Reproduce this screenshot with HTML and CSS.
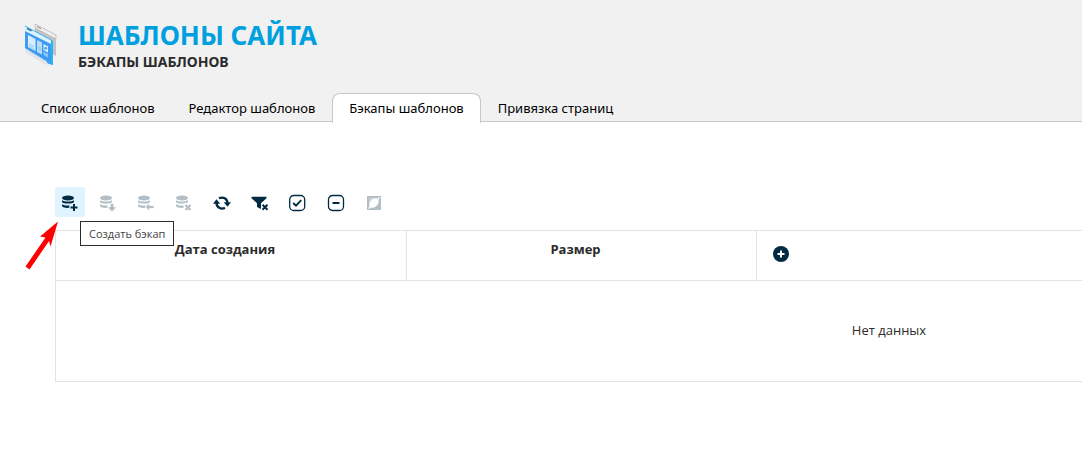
FILE: index.html
```
<!DOCTYPE html>
<html lang="ru">
<head>
<meta charset="utf-8">
<title>Шаблоны сайта</title>
<link rel="stylesheet" href="styles.css">
</head>
<body>
<svg class="defs" aria-hidden="true">
  <symbol id="db" viewBox="0 0 18 18">
    <ellipse cx="7" cy="4" rx="6" ry="2.6"/>
    <path d="M1 6.200c2 1.700 10 1.700 12 0v1.800c-1 2-11 2-12 0zM1 10.200c1.600 1.300 5 1.500 7.600 1.200v2.400C5.500 14.200 2 13.800 1 12z"/>
  </symbol>
</svg>
<header class="header">
  <div class="brand">
    <svg class="logo" viewBox="0 0 34 44" aria-hidden="true">
      <path d="M11 1l21 11v21L11 22z" fill="#c4c4c4"/>
      <path d="M11 1l21 11v4L11 5z" fill="#eee" stroke="#aaa" stroke-width=".6"/>
      <path d="M13 3.500l4 2.200" stroke="#888"/>
      <path d="M1 4l26 13 2 1v24l-4-1L1 27z" fill="#3e9bf4"/>
      <path d="M1 25l22 13.500v4L1 29z" fill="#dde3e8"/>
      <path d="M1 3l26 14v4L1 8z" fill="#e2f2fd"/>
      <path d="M27 17l2 1v24l-2-1z" fill="#27b6f5"/>
      <path d="M1 3l27 14.500" fill="none" stroke="#39b5f1"/>
      <path d="M3 5.500l4.500 2.400" stroke="#2678b5" stroke-width="1.500"/>
      <path d="M4 12l7.500 4v12L4 24z" fill="#d8ecfb"/>
      <path d="M13 17l5 2.600v12L13 29z" fill="#b9dcf8"/>
      <path d="M19.500 21l4.500 2.400v6L19.500 27z" fill="#e0f3fe"/>
      <path d="M19.500 28.500l4.500 2.400v3.500l-4.500-2.400z" fill="#8bc7f7"/>
      <path d="M5 21l5 2.800M5 23l5 2.800M14 24l3 1.600M14 26l3 1.600" stroke="#7db9ed" stroke-width=".7"/>
      <circle cx="21.700" cy="25.200" r="1.500" fill="#4eaaf1"/>
    </svg>
    <div>
      <h1 class="title">ШАБЛОНЫ САЙТА</h1>
      <h2 class="subtitle">БЭКАПЫ ШАБЛОНОВ</h2>
    </div>
  </div>
  <nav class="tabs">
    <a class="tab" href="#list">Список шаблонов</a>
    <a class="tab" href="#editor">Редактор шаблонов</a>
    <a class="tab tab-active" href="#backups" aria-current="page">Бэкапы шаблонов</a>
    <a class="tab" href="#pages">Привязка страниц</a>
  </nav>
</header>
<main class="content">
  <div class="toolbar">
    <button class="tool tool-hover" type="button" aria-label="Создать бэкап" aria-describedby="tip">
      <svg viewBox="0 0 18 18"><use href="#db" width="18" height="18"/><path d="M13 9v9M8.500 13.500h9" stroke="#e0f4ff" stroke-width="4"/><path d="M13 10v7M9.500 13.500h7" stroke="currentColor" stroke-width="2"/></svg>
    </button>
    <button class="tool" type="button" aria-label="Скачать" disabled>
      <svg viewBox="0 0 18 18"><use href="#db" width="18" height="18"/><path d="M11.200 9.500h3.600V13h2.700L13 18l-4.500-5h2.700z" stroke="#fff" stroke-width=".7"/></svg>
    </button>
    <button class="tool" type="button" aria-label="Восстановить" disabled>
      <svg viewBox="0 0 18 18"><use href="#db" width="18" height="18"/><path d="M8.300 13l4.200-4v2.500H17v3h-4.500V17z" stroke="#fff" stroke-width=".7"/></svg>
    </button>
    <button class="tool" type="button" aria-label="Удалить" disabled>
      <svg viewBox="0 0 18 18"><use href="#db" width="18" height="18"/><path d="M9.500 9.500l7 7m0-7l-7 7" stroke="#fff" stroke-width="3.500"/><path d="M10.500 11l5 5m0-5l-5 5" stroke="currentColor" stroke-width="2.200"/></svg>
    </button>
    <button class="tool" type="button" aria-label="Обновить">
      <svg viewBox="0 0 18 18"><path d="M6 4.300C10 2.500 14.500 4.500 14.500 9.500M12 13.900C8 15.700 3.500 13.700 3.500 8.700" fill="none" stroke="currentColor" stroke-width="2.300"/><path d="M10.800 8.300H18l-3.500 4.500zM0 9.800h7.200L3.500 5.300z"/></svg>
    </button>
    <button class="tool" type="button" aria-label="Сбросить фильтр">
      <svg viewBox="0 0 18 18"><path d="M.5 2.700h15v1.500L10 9.300V15l-4-2V9.300L.5 4.200z"/><path d="M11.500 10.700l5 5m0-5l-5 5" stroke="currentColor" stroke-width="2"/></svg>
    </button>
    <button class="tool" type="button" aria-label="Выделить все">
      <svg viewBox="0 0 18 18"><rect x=".7" y="1.500" width="15" height="15" rx="4" fill="none" stroke="currentColor" stroke-width="1.300"/><path d="M4.200 9l2.800 2.700 5.200-5.500" fill="none" stroke="currentColor" stroke-width="1.900"/></svg>
    </button>
    <button class="tool" type="button" aria-label="Снять выделение">
      <svg viewBox="0 0 18 18"><rect x="1.500" y="1.500" width="15" height="15" rx="4" fill="none" stroke="currentColor" stroke-width="1.300"/><path d="M5.500 9h7" stroke="currentColor" stroke-width="2"/></svg>
    </button>
    <button class="tool" type="button" aria-label="Инвертировать выделение" disabled>
      <svg viewBox="0 0 18 18"><path d="M2 2h14v14H2z"/><path d="M4 14V4h10z" fill="#c9d2d7"/><ellipse cx="9" cy="9" rx="5.500" ry="3.800" fill="#fff" transform="rotate(-45 9 9)"/><path d="M3.500 14.500l3-3M12 6l2.500-2.500" stroke="#fff" stroke-width="1.200"/></svg>
    </button>
    <div class="tooltip" id="tip" role="tooltip">Создать бэкап</div>
    <svg class="pointer" viewBox="0 0 36 50" aria-hidden="true"><path d="M34 1.500L16 16.500l5.500 1L1.500 46.500l4 3L25 21l1.500 5.500z" fill="red"/></svg>
  </div>
  <div class="grid-view">
    <table class="grid">
      <colgroup><col class="col-date"><col class="col-size"><col></colgroup>
      <thead>
        <tr>
          <th>Дата создания</th>
          <th>Размер</th>
          <th class="add-cell">
            <button class="add" type="button" aria-label="Добавить столбец"><svg viewBox="0 0 16 16"><circle cx="8" cy="8" r="8" fill="#002b42"/><path d="M8 4.500v7M4.500 8h7" stroke="#fff" stroke-width="2"/></svg></button>
          </th>
        </tr>
      </thead>
      <tbody><tr><td class="empty" colspan="3">Нет данных</td></tr></tbody>
    </table>
  </div>
</main>
</body>
</html>
```
FILE: styles.css
```
* { box-sizing: border-box; }
body {
  margin: 0;
  background: #fff;
  color: #2b2b2b;
  font-family: "Open Sans", "Noto Sans", sans-serif;
  font-size: 13px;
}
.defs { position: absolute; width: 0; height: 0; }
.header {
  padding-top: 18px;
  background: #f1f1f1;
  border-bottom: 1px solid #c8c8c8;
}
.brand {
  display: flex;
  align-items: flex-start;
  gap: 20px;
  height: 75px;
  padding-left: 24px;
}
.logo { width: 34px; height: 44px; margin-top: 5px; }
.title, .subtitle {
  margin: 0;
  font-family: "Noto Sans", sans-serif;
  font-weight: 700;
}
.title { color: #00a0df; font-size: 26px; line-height: 35px; }
.subtitle { font-size: 14px; line-height: 18px; }
.tabs {
  display: flex;
  height: 29px;
  margin-bottom: -1px;
  padding-left: 24px;
}
.tab {
  padding: 0 16px;
  border: 1px solid transparent;
  border-bottom: 0;
  border-radius: 8px 8px 0 0;
  color: #000;
  font-family: "Noto Sans", sans-serif;
  font-size: 13px;
  line-height: 29px;
  text-decoration: none;
  white-space: nowrap;
}
.tab-active { height: 30px; background: #fff; border-color: #c8c8c8; }
.content { padding: 65px 0 0 55px; }
.toolbar { position: relative; display: flex; gap: 8px; }
.tool {
  display: flex;
  align-items: center;
  justify-content: center;
  width: 30px;
  height: 30px;
  padding: 2px 0 0;
  border: 0;
  border-radius: 2px;
  background: none;
  color: #002b42;
}
.tool:disabled { color: #b2bfc6; }
.tool-hover { background: #e0f4ff; }
.tool svg { width: 18px; height: 18px; fill: currentColor; }
.tooltip {
  position: absolute;
  z-index: 1;
  top: 34px;
  left: 25px;
  padding: 0 8px;
  border: 1px solid #2b2b2b;
  background: #fff;
  color: #444;
  font-size: 11px;
  line-height: 23px;
  white-space: nowrap;
}
.pointer {
  position: absolute;
  z-index: 1;
  top: 33px;
  left: -31px;
  width: 36px;
  height: 50px;
}
.grid-view { margin-top: 13px; overflow: hidden; }
.grid {
  width: 1668px;
  border-collapse: collapse;
  table-layout: fixed;
}
.col-date { width: 351px; }
.col-size { width: 350px; }
.grid th, .grid td { border: 1px solid #e3e3e3; }
.grid th {
  height: 50px;
  padding: 9px 28px 9px 16px;
  font-weight: 700;
  line-height: 18px;
  vertical-align: top;
}
.grid .add-cell { padding: 15px 16px; text-align: left; }
.add {
  display: block;
  width: 16px;
  height: 16px;
  padding: 0;
  border: 0;
  background: none;
}
.add svg { display: block; }
.grid .empty { height: 101px; padding: 0 0 2px; text-align: center; }
```
